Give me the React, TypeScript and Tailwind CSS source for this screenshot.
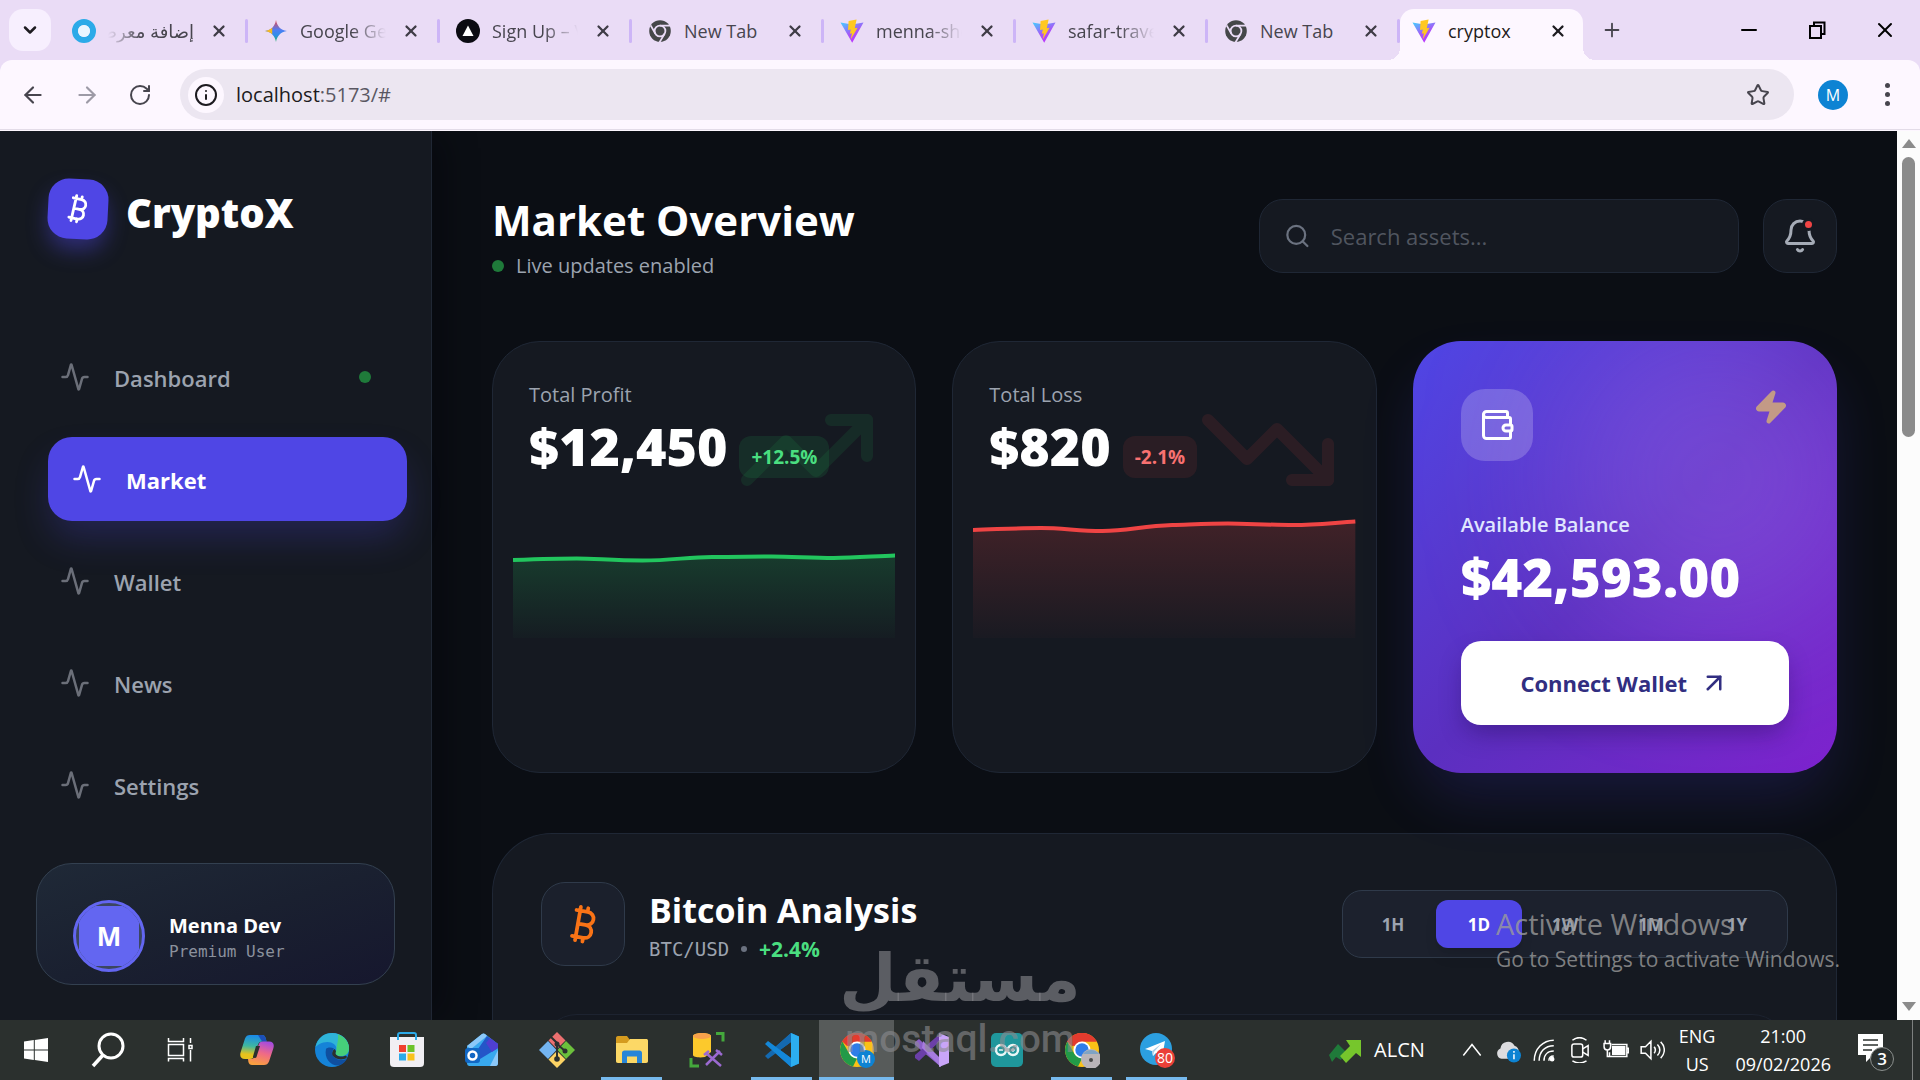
import type { ReactNode } from 'react';
import {
  Activity,
  ArrowLeft,
  ArrowRight,
  ArrowUpRight,
  Bell,
  Bitcoin,
  ChevronDown,
  Info,
  Minus,
  Plus,
  RotateCw,
  Search,
  Star,
  TrendingDown,
  TrendingUp,
  Wallet,
  X,
  Zap,
} from 'lucide-react';

/* ---------- favicons ---------- */

function ViteIcon() {
  return (
    <svg viewBox="0 0 24 24" className="size-6" aria-hidden="true">
      <defs>
        <linearGradient id="vite-a" x1="0" y1="0" x2="0.6" y2="1">
          <stop offset="0" stopColor="#41d1ff" />
          <stop offset="0.6" stopColor="#a855f7" />
          <stop offset="1" stopColor="#bd34fe" />
        </linearGradient>
      </defs>
      <path d="M0.5 3.5 12 5.5 23.5 3.5 12.2 23.8Z" fill="url(#vite-a)" />
      <path d="M16.6 0.4 8.6 2 8 11l2.8-.6-.9 4.4 2-.6-1.2 6.2L17.6 8.8l-2.8.5 1.8-8.9Z" fill="#ffc821" />
    </svg>
  );
}

function ChromeMono() {
  return (
    <svg viewBox="0 0 24 24" className="size-6" aria-hidden="true">
      <circle cx="12" cy="12" r="10.8" fill="#454749" />
      <circle cx="12" cy="12" r="5.4" fill="none" stroke="#eadcf6" strokeWidth="1.8" />
      <path d="M12 6.7h10M7.4 14.7 2.6 6.4M16.6 14.7l-5 8.4" stroke="#eadcf6" strokeWidth="1.8" />
    </svg>
  );
}

function RingIcon() {
  return (
    <svg viewBox="0 0 24 24" className="size-6" aria-hidden="true">
      <circle cx="12" cy="12" r="9" fill="none" stroke="#2caae8" strokeWidth="6" />
      <circle cx="12" cy="12" r="6" fill="#eaf6ff" />
    </svg>
  );
}

function GeminiIcon() {
  return (
    <svg viewBox="0 0 24 24" className="size-6" aria-hidden="true">
      <defs>
        <linearGradient id="gem-a" x1="0.5" y1="0" x2="0.5" y2="1">
          <stop offset="0" stopColor="#ef4444" />
          <stop offset="0.45" stopColor="#4f7df5" />
          <stop offset="0.7" stopColor="#2f8fe8" />
          <stop offset="1" stopColor="#22b35e" />
        </linearGradient>
      </defs>
      <path d="M12 1c1 6 4.500 10 11 11-6.500 1-10 5-11 11-1-6-4.500-10-11-11 6.500-1 10-5 11-11Z" fill="url(#gem-a)" />
      <path d="M1 12c3-.5 5.500-1.600 7.200-3.200v6.400C6.500 13.600 4 12.500 1 12Z" fill="#f7b921" />
    </svg>
  );
}

function VercelIcon() {
  return (
    <svg viewBox="0 0 24 24" className="size-6" aria-hidden="true">
      <circle cx="12" cy="12" r="12" fill="#0b0b12" />
      <path d="M12 6.500 17.500 17h-11Z" fill="#fff" />
    </svg>
  );
}

/* ---------- browser chrome ---------- */

type Tab = { title: string; icon: ReactNode; rtl?: boolean; fade?: boolean };

const tabs: Tab[] = [
  { title: 'إضافة معرض', icon: <RingIcon />, rtl: true, fade: true },
  { title: 'Google Gemini', icon: <GeminiIcon />, fade: true },
  { title: 'Sign Up – Vercel', icon: <VercelIcon />, fade: true },
  { title: 'New Tab', icon: <ChromeMono /> },
  { title: 'menna-shop', icon: <ViteIcon />, fade: true },
  { title: 'safar-travel', icon: <ViteIcon />, fade: true },
  { title: 'New Tab', icon: <ChromeMono /> },
];

function TabItem({ tab }: { tab: Tab }) {
  return (
    <div className="flex w-48 items-center pl-4">
      {tab.icon}
      <button
        dir={tab.rtl ? 'rtl' : 'ltr'}
        className={
          tab.rtl
            ? 'ml-3 w-[86px] overflow-hidden text-start text-lg whitespace-nowrap [mask-image:linear-gradient(to_left,black_60%,transparent)]'
            : tab.fade
              ? 'ml-3 w-[86px] overflow-hidden text-start text-lg whitespace-nowrap [mask-image:linear-gradient(to_right,black_60%,transparent)]'
              : 'ml-3 w-[86px] overflow-hidden text-start text-lg whitespace-nowrap'
        }
      >
        {tab.title}
      </button>
      <button aria-label="Close tab" className="ml-4 text-[#3f3c46]">
        <X className="size-[18px]" strokeWidth={3} />
      </button>
      <span className="ml-auto h-6 w-[3px] rounded bg-[#cdb5f7]" />
    </div>
  );
}

function TabStrip() {
  return (
    <div className="flex h-[60px] items-stretch bg-[#eadcf6] pl-2 text-[#47454e]">
      <button aria-label="Search tabs" className="mt-[9px] mr-[5px] ml-px flex size-[42px] items-center justify-center rounded-[14px] bg-[#f7effe] text-[#1d1b20]">
        <ChevronDown className="size-5" strokeWidth={3} />
      </button>
      <div className="flex h-[60px] pt-px">
        {tabs.map((tab, i) => (
          <TabItem key={i} tab={tab} />
        ))}
      </div>
      <div className="relative mt-[9px] flex w-[183px] items-center rounded-t-[14px] bg-[#fdf7ff] pb-2 pl-3 text-[#1d1b20]">
        <span className="absolute bottom-0 -left-3 size-3 bg-[radial-gradient(circle_at_0_0,transparent_12px,#fdf7ff_12px)]" />
        <span className="absolute -right-3 bottom-0 size-3 bg-[radial-gradient(circle_at_100%_0,transparent_12px,#fdf7ff_12px)]" />
        <ViteIcon />
        <button className="ml-3 text-lg">cryptox</button>
        <button aria-label="Close tab" className="mr-4 ml-auto">
          <X className="size-[18px]" strokeWidth={3} />
        </button>
      </div>
      <button aria-label="New tab" className="ml-[14px] px-1">
        <Plus className="size-[22px]" strokeWidth={2} />
      </button>
      <div className="mr-[23px] ml-auto flex items-center gap-11 text-black">
        <button aria-label="Minimise">
          <Minus className="size-6" strokeWidth={2} />
        </button>
        <button aria-label="Restore">
          <svg viewBox="0 0 24 24" className="size-6" fill="none" stroke="currentColor" strokeWidth="2">
            <path d="M5 8h11v12H5ZM9 8V4.500h10.500V16H16" />
          </svg>
        </button>
        <button aria-label="Close window">
          <X className="size-6" strokeWidth={2} />
        </button>
      </div>
    </div>
  );
}

function Toolbar() {
  return (
    <div className="bg-[#eadcf6]">
      <div className="flex h-[70px] items-center rounded-t-xl border-b border-[#e3dce8] bg-[#fdf7ff] pr-[21px] pl-5 text-[#47454e]">
        <button aria-label="Back">
          <ArrowLeft className="size-[26px]" />
        </button>
        <button aria-label="Forward" className="ml-7 text-[#9d9aa6]">
          <ArrowRight className="size-[26px]" />
        </button>
        <button aria-label="Reload" className="ml-7">
          <RotateCw className="size-6" />
        </button>
        <div className="ml-7 flex h-[51px] flex-1 items-center rounded-full bg-[#ece6f1] pr-6 pl-2">
          <button aria-label="Site information" className="flex size-9 items-center justify-center rounded-full bg-[#fdf7ff] text-[#1d1b20]">
            <Info className="size-6" />
          </button>
          <label htmlFor="url" className="sr-only">Address</label>
          <span className="relative ml-3 flex-1">
            <input id="url" defaultValue="localhost:5173/#" className="w-full bg-transparent text-xl leading-8 text-transparent outline-none" />
            <span aria-hidden="true" className="pointer-events-none absolute inset-0 text-xl leading-8 text-[#5a5762]">
              <span className="text-[#1d1b20]">localhost</span>:5173/#
            </span>
          </span>
          <button aria-label="Bookmark">
            <Star className="size-6" />
          </button>
        </div>
        <button aria-label="Profile" className="ml-6 flex size-[30px] items-center justify-center rounded-full bg-[#0d83d3] text-base text-white">
          M
        </button>
        <button aria-label="Menu" className="ml-[27px] flex w-6 flex-col items-center gap-1">
          <span className="size-[5px] rounded-full bg-[#47454e]" />
          <span className="size-[5px] rounded-full bg-[#47454e]" />
          <span className="size-[5px] rounded-full bg-[#47454e]" />
        </button>
      </div>
    </div>
  );
}

/* ---------- sidebar ---------- */

const navItems = ['Dashboard', 'Market', 'Wallet', 'News', 'Settings'];

function Sidebar() {
  return (
    <aside className="relative z-10 flex w-[432px] shrink-0 flex-col border-r border-[#202734] bg-[#151921] shadow-[16px_0_32px_-6px_rgba(0,0,8,0.4)]">
      <div className="flex items-start gap-[18px] px-12 pt-12">
        <div className="flex size-[60px] rotate-3 items-center justify-center rounded-[20px] bg-[#4f46e5] text-white shadow-[0_12px_22px_-2px_rgba(79,70,229,0.45)]">
          <Bitcoin className="size-[34px]" />
        </div>
        <span className="pt-1 font-['Noto_Sans','Open_Sans',sans-serif] text-[40px] leading-[60px] font-black text-white">CryptoX</span>
      </div>
      <nav className="mt-[92px] flex flex-col gap-[18px] px-9">
        {navItems.map((item) => {
          const active = item === 'Market';
          return (
            <a
              key={item}
              href="#"
              className={
                active
                  ? 'flex h-[84px] translate-x-3 items-center gap-6 rounded-3xl bg-[#4f46e5] px-6 text-white shadow-[0_20px_36px_-4px_rgba(79,70,229,0.25)]'
                  : 'flex h-[84px] items-center gap-6 rounded-3xl px-6 text-[#9ca3af]'
              }
            >
              <Activity className={active ? 'size-[30px]' : 'size-[30px] text-[#6b6f79]'} />
              <span className={active ? 'pt-0.5 text-[22px] font-bold' : 'pt-0.5 text-[22px] font-semibold'}>{item}</span>
              {item === 'Dashboard' && <span className="ml-auto size-3 rounded-full bg-[#1f7a3a]" />}
            </a>
          );
        })}
      </nav>
      <div className="mx-9 mt-9 flex items-start gap-6 rounded-[36px] border border-[#334050] bg-linear-to-br from-[#1f2937] via-[#1a2030] to-[#16172e] px-9 pt-9 pb-3">
        <div className="size-[72px] overflow-hidden rounded-full border-[3px] border-[#6366f1] bg-[#3b4660] p-[3px]">
          <div className="flex size-full items-center justify-center bg-[#6366f1] text-[26px] font-bold text-white">M</div>
        </div>
        <div className="pt-3">
          <div className="text-xl leading-7 font-bold text-white">Menna Dev</div>
          <div className="font-['DejaVu_Sans_Mono',monospace] text-base leading-6 text-[#8b919d]">Premium User</div>
        </div>
      </div>
    </aside>
  );
}

/* ---------- main content ---------- */

type StatProps = {
  label: string;
  value: string;
  change: string;
  up: boolean;
  line: string;
};

function StatCard({ label, value, change, up, line }: StatProps) {
  const color = up ? '#22c55e' : '#ef4444';
  const id = up ? 'fill-up' : 'fill-down';
  return (
    <section className="relative overflow-hidden rounded-[48px] border border-[#1f2735] bg-[#151921] p-9">
      <div className={up ? 'absolute top-9 right-9 text-[#22c55e] opacity-10' : 'absolute top-9 right-9 text-[#ef4444] opacity-10'}>
        {up ? <TrendingUp className="size-36" /> : <TrendingDown className="size-36" />}
      </div>
      <h2 className="pt-px text-xl leading-8 font-medium text-[#9ca3af]">{label}</h2>
      <div className="relative flex h-[67px] items-end gap-3">
        <span className="font-['Noto_Sans','Open_Sans',sans-serif] text-[52px] leading-[64px] font-black text-white">{value}</span>
        <span
          className={
            up
              ? 'rounded-xl bg-[#22c55e]/12 px-3 pt-px text-[19px] leading-[41px] font-bold text-[#4ade80]'
              : 'rounded-xl bg-[#ef4444]/10 px-3 pt-px text-[19px] leading-[41px] font-bold text-[#f87171]'
          }
        >
          {change}
        </span>
      </div>
      <div className="-mx-4 mt-5">
        <svg viewBox="0 0 384 140" preserveAspectRatio="none" className="h-[140px] w-full" aria-hidden="true">
          <defs>
            <linearGradient id={id} x1="0" y1="0" x2="0" y2="1">
              <stop offset="0" stopColor={color} stopOpacity="0.2" />
              <stop offset="1" stopColor={color} stopOpacity="0.02" />
            </linearGradient>
          </defs>
          <path d={line + 'V140H0Z'} fill={`url(#${id})`} />
          <path d={line} fill="none" stroke={color} strokeWidth="4" />
        </svg>
      </div>
    </section>
  );
}

function BalanceCard() {
  return (
    <section className="relative rounded-[48px] bg-linear-to-br from-[#4f46e5] via-[#5b2fc0] to-[#7e22ce] p-12 shadow-[0_30px_60px_-8px_rgba(79,70,229,0.2)]">
      <div className="absolute inset-0 overflow-hidden rounded-[48px]">
        <div className="absolute -top-6 -right-10 size-80 rounded-full bg-[#b583ff]/28 blur-[70px]" />
      </div>
      <div className="relative">
        <div className="flex items-start justify-between">
          <div className="flex size-[72px] items-center justify-center rounded-3xl bg-white/20 text-white">
            <Wallet className="size-9" />
          </div>
          <Zap className="size-9 fill-current text-[#c39a86]" />
        </div>
        <div className="mt-12 text-xl leading-8 font-semibold text-[#e0e7ff]">Available Balance</div>
        <div className="font-['Noto_Sans','Open_Sans',sans-serif] text-[53px] leading-[72px] font-black text-white">$42,593.00</div>
        <button className="mt-7 flex h-[84px] w-full items-center justify-center gap-3 rounded-[20px] bg-white text-[22px] font-bold text-[#312e81] shadow-[0_12px_24px_-4px_rgba(30,10,80,0.4)]">
          Connect Wallet
          <ArrowUpRight className="size-[30px]" />
        </button>
      </div>
    </section>
  );
}

const ranges = ['1H', '1D', '1W', '1M', '1Y'];

function Analysis() {
  return (
    <section className="mt-[60px] rounded-t-[60px] border border-b-0 border-[#1f2735] bg-[#151921] px-12 pt-12">
      <div className="flex items-center">
        <div className="flex size-[84px] items-center justify-center rounded-3xl border border-[#2f3a4a] bg-[#1b202c]">
          <Bitcoin className="size-[45px] text-[#f97316]" />
        </div>
        <div className="ml-6">
          <h2 className="text-[34px] leading-[50px] font-bold text-white">Bitcoin Analysis</h2>
          <div className="flex items-center text-[21px] leading-7">
            <span className="font-['DejaVu_Sans_Mono',monospace] text-[19px] leading-7 text-[#9ca3af]">BTC/USD</span>
            <span className="mx-3 size-[6px] rounded-full bg-[#6b7280]" />
            <span className="font-bold text-[#4ade80]">+2.4%</span>
          </div>
        </div>
        <div className="ml-auto flex rounded-[20px] border border-[#2f3a4a] bg-[#1c212d] px-[7px] py-[9px]">
          {ranges.map((r) => (
            <button
              key={r}
              className={
                r === '1D'
                  ? 'h-12 w-[86px] rounded-xl bg-[#4f46e5] pt-px text-[17px] font-bold text-white shadow-lg'
                  : 'h-12 w-[86px] rounded-xl pt-px text-[17px] font-bold text-[#9ca3af]'
              }
            >
              {r}
            </button>
          ))}
        </div>
      </div>
      <div className="mt-12 h-80 rounded-[36px] border border-[#1d2330] bg-[#141820]" />
    </section>
  );
}

function Main() {
  return (
    <main className="min-w-0 flex-1 overflow-hidden bg-[#0b0e14] px-[60px] pt-[60px]">
      <header className="flex h-[90px] items-center">
        <div>
          <h1 className="text-[42px] leading-[60px] font-bold text-white">Market Overview</h1>
          <p className="flex items-center gap-3 text-xl leading-8 text-[#9ca3af]">
            <span className="size-3 rounded-full bg-[#1f7a3a]" />
            Live updates enabled
          </p>
        </div>
        <label className="ml-auto flex h-[74px] w-[480px] items-center gap-5 rounded-3xl border border-[#1f2735] bg-[#151921] px-6 text-[#6b7280]">
          <Search className="size-[30px]" />
          <span className="sr-only">Search assets</span>
          <input type="text" placeholder="Search assets..." className="w-full bg-transparent text-[22px] text-white outline-none placeholder:text-[#50555f]" />
        </label>
        <button aria-label="Notifications" className="relative ml-6 flex size-[74px] items-center justify-center rounded-3xl border border-[#1f2735] bg-[#151921] text-[#a5abb6]">
          <Bell className="size-9" />
          <span className="absolute top-[18px] right-[21px] size-[13px] rounded-full border-[3px] border-[#151921] bg-[#ef4444]" />
        </button>
      </header>
      <div className="mt-[60px] grid grid-cols-3 gap-9">
        <StatCard
          label="Total Profit"
          value="$12,450"
          change="+12.5%"
          up
          line="M0 62C30 61 45 60.500 64 60.500S100 62.500 130 62.500S175 59 200 59S240 58.500 260 58.500S300 60 322 60S365 58 384 57.500"
        />
        <StatCard
          label="Total Loss"
          value="$820"
          change="-2.1%"
          up={false}
          line="M0 32C30 31 45 30 68 30S105 33 130 33S170 28 200 27S240 25.500 256 25.500S300 27 322 27S365 24.500 384 23.500"
        />
        <BalanceCard />
      </div>
      <Analysis />
    </main>
  );
}

function ScrollBar() {
  return (
    <div className="flex w-[23px] shrink-0 flex-col items-center bg-[#fcfcfc] py-2">
      <svg viewBox="0 0 14 10" className="h-[10px] w-[14px]"><path d="M7 0 14 9H0Z" fill="#8b8b8b" /></svg>
      <div className="mt-2 h-[280px] w-[13px] rounded-full bg-[#8b8b8b]" />
      <svg viewBox="0 0 14 10" className="mt-auto h-[10px] w-[14px]"><path d="M7 9 14 0H0Z" fill="#8b8b8b" /></svg>
    </div>
  );
}

/* ---------- taskbar ---------- */

function Glyph({ children }: { children: ReactNode }) {
  return (
    <svg viewBox="0 0 36 36" className="size-9" fill="none" aria-hidden="true">
      {children}
    </svg>
  );
}

function ChromeColor() {
  return (
    <>
      <circle cx="18" cy="18" r="17" fill="#fbc116" />
      <path d="M18 18 3.300 9.500A17 17 0 0 1 32.700 9.500L18 9.500Z" fill="#e33b2e" />
      <path d="M3.300 9.500 10.600 22.200 18 26.500 14 34.500A17 17 0 0 1 3.300 9.500Z" fill="#229a48" />
      <path d="M3.300 9.500A17 17 0 0 1 32.700 9.500H18a8.500 8.500 0 0 0-7.400 4.300L8 14Z" fill="#e33b2e" />
      <circle cx="18" cy="18" r="8.500" fill="#fff" />
      <circle cx="18" cy="18" r="6.700" fill="#2f7de8" />
    </>
  );
}

type AppEntry = { name: string; icon: ReactNode; state?: 'open' | 'active' };

const systemButtons: AppEntry[] = [
  {
    name: 'Start',
    icon: <path d="M6 9.500 15.800 8v9.400H6ZM16.800 7.900 30 6v11.400H16.800ZM6 18.500h9.800V28L6 26.500ZM16.800 18.500H30V30l-13.200-2Z" fill="#fff" />,
  },
  {
    name: 'Search',
    icon: (
      <>
        <circle cx="21" cy="14" r="12" stroke="#fff" strokeWidth="3" />
        <path d="M13 23 3 34" stroke="#fff" strokeWidth="3.500" />
      </>
    ),
  },
  {
    name: 'Task View',
    icon: (
      <path d="M6.500 6v3.500h15V6M6.500 12.500h15v11h-15ZM6.500 29.500V26.500h15v3M28.500 6v5M28.500 18v11.500M27 13.500h3v3h-3Z" stroke="#fff" strokeWidth="1.500" />
    ),
  },
];

const apps: AppEntry[] = [
  {
    name: 'Copilot',
    icon: (
      <>
        <defs>
          <linearGradient id="cop-a" x1="0.3" y1="0" x2="0.2" y2="1">
            <stop offset="0" stopColor="#1a8be8" />
            <stop offset="0.45" stopColor="#3fb7a0" />
            <stop offset="0.8" stopColor="#e8c21c" />
          </linearGradient>
          <linearGradient id="cop-b" x1="0.7" y1="0" x2="0.4" y2="1">
            <stop offset="0" stopColor="#a44be0" />
            <stop offset="0.5" stopColor="#f06a86" />
            <stop offset="1" stopColor="#f9a03f" />
          </linearGradient>
        </defs>
        <path d="M11 3h12c2 0 3 1 3.600 3l1 3.500h-4c-2.500 0-4 1-4.800 3.500L15 24c-.7 2-1.500 3-4 3H6c-4.500 0-5.500-3-4.300-7L6 6.500C7 4 8.500 3 11 3Z" fill="url(#cop-a)" />
        <path d="M19 3h4c2 0 3 1 3.600 3l1 3.500h-4.500Z" fill="#1c4fb8" />
        <path d="M25 33H13c-2 0-3-1-3.600-3L9 27h3c2.500 0 3.500-1.500 4.200-3.500L19.500 13c.7-2.500 2-3.500 4.500-3.500h6c4.500 0 5.500 3 4.300 7L30 29.500C29 32 27.500 33 25 33Z" fill="url(#cop-b)" />
        <path d="M14 24.500 17 14h4l-3.500 11c-.5 1.500-4 1.500-3.500-.5Z" fill="#2b302e" />
      </>
    ),
  },
  {
    name: 'Edge',
    icon: (
      <>
        <circle cx="18" cy="18" r="17" fill="#1583d8" />
        <path d="M1.500 15C4 5 11 1 18 1c10 0 17 7 17 15 0 6-4 8-8 8-4 0-5.500-1.500-5.500-3 0-1 1-2 1-4 0-4-4-7-9-7-6 0-10 3-12 5Z" fill="#2fb4d8" />
        <path d="M24 2.200C31 5 35 10.500 35 16c0 6-4 8-8 8-4 0-5.500-1.500-5.500-3 0-1 1-2 1-4 0-3 2-8 1.500-14.800Z" fill="#46cf7a" />
        <path d="M12 17c-2 9 4 17 13 16.500 4-1.500 7-4.500 8-7-5 3-12 1-14-3-1.500-3-.5-5 1-7-3-1.500-7-1-8 .5Z" fill="#0f4fa0" />
        <path d="M21.500 21c0 3 5 4.500 9 3 1.500-.5 3 0 2 2-5 3-12 1-14-3-1-2 .5-5 2-6 1 1 2 2 1 4Z" fill="#2b302e" />
      </>
    ),
  },
  {
    name: 'Microsoft Store',
    icon: (
      <>
        <path d="M9 9V3c0-1.500.5-2 2-2h14c1.500 0 2 .5 2 2v6" stroke="#2caae8" strokeWidth="2" />
        <path d="M1 5h34v26c0 3-1.500 4-4 4H5c-2.500 0-4-1-4-4Z" fill="#f1eff3" />
        <path d="M9 5v3M27 5v3" stroke="#2caae8" strokeWidth="2" />
        <path d="M10 13h7v7h-7Z" fill="#f0402f" />
        <path d="M18.500 13h7v7h-7Z" fill="#6cc32b" />
        <path d="M10 21.500h7v7h-7Z" fill="#2caae8" />
        <path d="M18.500 21.500h7v7h-7Z" fill="#f8c21c" />
      </>
    ),
  },
  {
    name: 'Outlook',
    icon: (
      <>
        <path d="M3 14 18 2c1-.7 2-.7 3 0l13 10v19c0 2-1 3-2.500 3h-26C4 34 3 33 3 31Z" fill="#38a8ee" />
        <path d="M3 14 18 2c1-.7 2-.7 3 0l2 2L7 17Z" fill="#8cc8f8" />
        <path d="M23 4 34 12v4L16 27l-2-10Z" fill="#2456c8" />
        <path d="M26 6 34 12v4l-6 4-6-9Z" fill="#4f3fd0" />
        <path d="M34 18v13c0 2-1 3-2.500 3H26Z" fill="#8cc8f8" />
        <rect x="1" y="16" width="15" height="15" rx="3" fill="#1267c4" />
        <circle cx="8.500" cy="23.500" r="4" stroke="#fff" strokeWidth="2.500" />
      </>
    ),
  },
  {
    name: 'Git',
    icon: (
      <>
        <path d="m18 0 8.500 8.500L18 17 9.500 8.500Z" fill="#ec7070" />
        <path d="m9 9 8.500 9L9 27l-9-9Z" fill="#74b4f0" />
        <path d="m27 9 9 9-9 9-8.500-9Z" fill="#6cc03c" />
        <path d="m18 19 8.500 8.500L18 36l-8.500-8.500Z" fill="#fcd364" />
        <path d="M12 5 18 11v17M18 12l8 7" stroke="#2b302e" strokeWidth="2" />
        <circle cx="18" cy="27" r="2.800" fill="#2b302e" />
        <circle cx="26" cy="19" r="2.500" fill="#2b302e" />
        <circle cx="18" cy="12" r="2.500" fill="#2b302e" />
      </>
    ),
  },
  {
    name: 'File Explorer',
    state: 'open',
    icon: (
      <>
        <path d="M2 6c0-1 .5-2 2-2h9l3 4v6H2Z" fill="#d59b1f" />
        <path d="M2 11h11l3-4h16c1.500 0 2 .5 2 2v20c0 1-.5 2-2 2H4c-1.500 0-2-1-2-2Z" fill="#fcd866" />
        <path d="M8 31V21c0-1.500 1-2.500 2.500-2.500h15c1.500 0 2.500 1 2.500 2.500v10h-5v-6.500H13V31Z" fill="#2785d8" />
      </>
    ),
  },
  {
    name: 'SQL Server',
    icon: (
      <>
        <path d="M4 4c0-4 18-4 18 0v16l-6 5c-6 1-12 0-12-2Z" fill="#fcc92c" />
        <ellipse cx="13" cy="4" rx="9" ry="3" fill="#f7a14c" />
        <path d="M27 1.500h7v8M2 26v8h8" stroke="#44a83c" strokeWidth="3" />
        <path d="M17 33 31 19M17 21l15 13M15 23l5-4M27 18l6 5" stroke="#9b6ad0" strokeWidth="2.500" />
      </>
    ),
  },
  {
    name: 'Visual Studio Code',
    state: 'open',
    icon: (
      <>
        <path d="M27 1 35 4.500v27L27 35 8 18Z" fill="#1278c8" />
        <path d="M27 1 35 4.500v27L27 35Z" fill="#2caef0" />
        <path d="M27 10 16 18l11 8Z" fill="#2b302e" />
        <path d="M27 1v9L4 27l-3-3Z" fill="#1469b0" />
        <path d="m4 9 23 17v9L1 12Z" fill="#1487d8" />
      </>
    ),
  },
  {
    name: 'Chrome',
    state: 'active',
    icon: (
      <>
        <ChromeColor />
        <circle cx="27" cy="27" r="9" fill="#0d83d3" />
        <text x="27" y="31" textAnchor="middle" fontSize="11" fill="#fff">M</text>
      </>
    ),
  },
  {
    name: 'Visual Studio',
    icon: (
      <>
        <path d="m1 10 4-3 22 21v7L1 13Z" fill="#8c5fc8" />
        <path d="m1 26 4 3L27 8V1L1 23Z" fill="#6b3fa8" />
        <path d="m9 9 18 18v8L8 16Z" fill="#a67be0" />
        <path d="M25 1 35 5v26l-10 4Z" fill="#c9a5f8" />
      </>
    ),
  },
  {
    name: 'Arduino',
    icon: (
      <>
        <rect x="2" y="1" width="32" height="34" rx="5" fill="#1f979c" />
        <circle cx="12" cy="18" r="5" stroke="#e8f6f6" strokeWidth="2.500" />
        <circle cx="24" cy="18" r="5" stroke="#e8f6f6" strokeWidth="2.500" />
        <path d="M10 18h4M22 18h4M24 16v4" stroke="#e8f6f6" strokeWidth="1.300" />
      </>
    ),
  },
  {
    name: 'Chrome (profile 2)',
    state: 'open',
    icon: (
      <>
        <ChromeColor />
        <circle cx="27" cy="27" r="10" fill="#b9b4b8" />
        <path d="M19 22a10 10 0 0 1 16 0Z" fill="#7fa3c4" />
        <circle cx="27" cy="28" r="2" fill="#4a4a4a" />
      </>
    ),
  },
  {
    name: 'Telegram',
    state: 'open',
    icon: (
      <>
        <circle cx="17" cy="17" r="16" fill="#2c9fe0" />
        <path d="M6 17 26 9l-3 17-6-5-3 3-1-5-7-2Z" fill="#fff" />
        <path d="m13 19 9-7-7 8-1 4Z" fill="#a8cfea" />
        <circle cx="26" cy="26" r="10" fill="#ea4038" />
        <text x="26" y="31" textAnchor="middle" fontSize="14" fill="#fff">80</text>
      </>
    ),
  },
];

function AppButton({ app }: { app: AppEntry }) {
  return (
    <button
      aria-label={app.name}
      className={
        app.state === 'active'
          ? 'flex h-full w-[75px] items-center justify-center border-b-[3px] border-[#76b9ed] bg-[#575b5a] pt-[3px]'
          : 'relative flex h-full w-[75px] items-center justify-center'
      }
    >
      <Glyph>{app.icon}</Glyph>
      {app.state === 'open' && <span className="absolute inset-x-[7px] bottom-0 h-[3px] bg-[#76b9ed]" />}
    </button>
  );
}

function TrayIcon({ children }: { children: ReactNode }) {
  return (
    <svg viewBox="0 0 24 24" className="size-[26px]" fill="none" stroke="#fff" strokeWidth="1.400" aria-hidden="true">
      {children}
    </svg>
  );
}

function Taskbar() {
  return (
    <footer className="flex h-[60px] shrink-0 items-center bg-[#2b302e] text-white">
      <div className="flex h-full">
        {systemButtons.map((app) => (
          <button key={app.name} aria-label={app.name} className="flex h-full w-[72px] items-center justify-center">
            <Glyph>{app.icon}</Glyph>
          </button>
        ))}
      </div>
      <div className="ml-[3px] flex h-full">
        {apps.map((app) => (
          <AppButton key={app.name} app={app} />
        ))}
      </div>
      <button className="ml-auto flex items-center gap-3 text-xl">
        <svg viewBox="0 0 34 28" className="h-7 w-[34px]" aria-hidden="true">
          <path d="m1 19 9-11 8 8-5 8-5-3-4 5Z" fill="#1f7a3a" />
          <path d="m12 20 10-10-4-6h15v17l-5-4-10 10Z" fill="#76c62c" />
        </svg>
        ALCN
      </button>
      <div className="ml-[34px] flex items-center gap-[10px]">
        <TrayIcon>
          <path d="m4 17 8-10 8 10" />
        </TrayIcon>
        <TrayIcon>
          <path d="M6 20a5 5 0 0 1-1-9.500A7 7 0 0 1 18 8c3 1 4 3 4 6v6Z" fill="#dcdcdf" stroke="none" />
          <circle cx="17.500" cy="17" r="6.500" fill="#0d83d3" stroke="none" />
          <path d="M17.500 16v4.500M17.500 13v1.600" />
        </TrayIcon>
        <TrayIcon>
          <path d="M3 22C3 11 11 3 21 3M7.500 22C7.500 13.500 13 8 21 8M12 22c0-5.500 3.500-9 9-9M16.500 22c0-3 1.500-4.500 4.500-4.500" />
          <circle cx="19.500" cy="20.500" r="1.500" fill="#fff" />
        </TrayIcon>
        <TrayIcon>
          <rect x="4.500" y="6.500" width="10" height="12" rx="2" />
          <path d="m14.500 11 5-3v9l-5-3M5 3c4-3 9-3 13 0M5 22c4 2.500 9 2.500 13 0" />
        </TrayIcon>
        <TrayIcon>
          <path d="M8 7h14v11H6v-4M22 10.500h1.500v4H22M2 3v3M6 3v3M1 6h6v3a3 3 0 0 1-6 0ZM4 12v6h4" />
          <path d="M9 9h11v7H9Z" fill="#fff" />
        </TrayIcon>
        <TrayIcon>
          <path d="M2 9h4l5-5v16l-5-5H2ZM14 9c1.500 2 1.500 4 0 6M17 7c3 3 3 7 0 10M20 4.500c4.500 4.500 4.500 10.500 0 15" />
        </TrayIcon>
      </div>
      <div className="ml-[14px] text-center text-lg leading-7">
        <div>ENG</div>
        <div>US</div>
      </div>
      <div className="ml-5 text-center text-lg leading-7">
        <div>21:00</div>
        <div>09/02/2026</div>
      </div>
      <button aria-label="Notifications" className="relative ml-6">
        <svg viewBox="0 0 40 44" className="h-11 w-10" aria-hidden="true">
          <path d="M3 6h25v21H18l-7 7v-7H3Z" fill="#fff" />
          <path d="M8 12h15M8 17h15M8 22h9" stroke="#2b302e" strokeWidth="1.500" />
          <circle cx="27" cy="31" r="11.500" fill="#2b302e" stroke="#8b8f8d" />
          <text x="27" y="37" textAnchor="middle" fontSize="17" fontWeight="600" fill="#fff">3</text>
        </svg>
      </button>
      <span className="mr-[7px] ml-[17px] h-full w-px bg-[#7d807f]" />
    </footer>
  );
}

export default function App() {
  return (
    <div className="relative flex h-screen flex-col overflow-hidden bg-[#0b0e14] font-['Open_Sans','Noto_Sans','DejaVu_Sans',sans-serif]">
      <TabStrip />
      <Toolbar />
      <div className="flex min-h-0 flex-1 overflow-hidden border-t border-[#fdf7ff]">
        <Sidebar />
        <Main />
        <ScrollBar />
      </div>
      <Taskbar />
      <div className="pointer-events-none absolute right-20 bottom-[106px] z-20 text-[#9b9b9b]/80">
        <div className="text-[29px] leading-10">Activate Windows</div>
        <div className="text-[21px] leading-[30px]">Go to Settings to activate Windows.</div>
      </div>
      <div className="pointer-events-none absolute inset-x-0 bottom-4 z-20 text-center text-[#8b8b8f]/60">
        <div dir="rtl" className="font-['DejaVu_Sans',sans-serif] text-[66px] leading-[70px] font-bold">مستقل</div>
        <div className="font-['Roboto',sans-serif] text-[39px] leading-[50px] font-medium">mostaql.com</div>
      </div>
    </div>
  );
}
